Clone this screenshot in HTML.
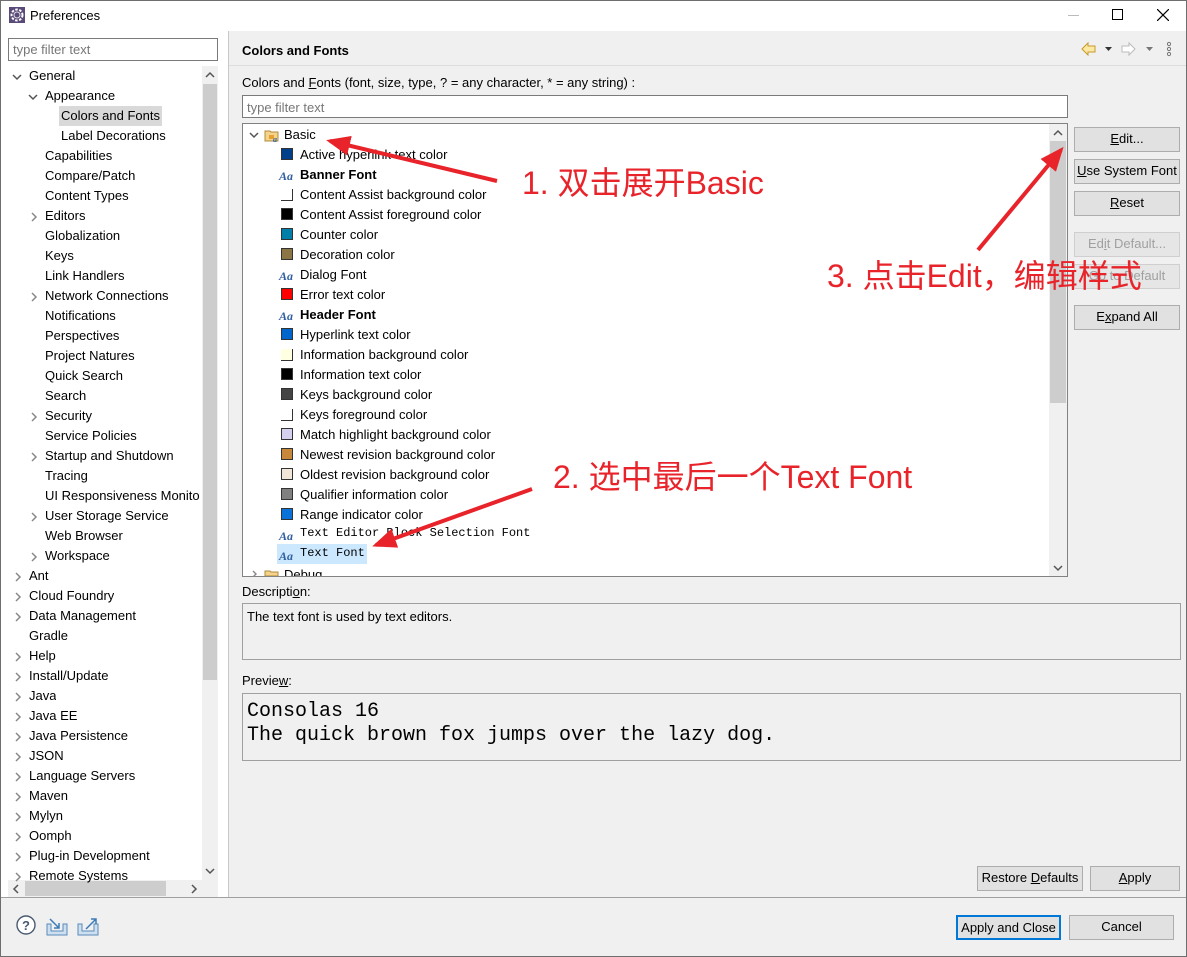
<!DOCTYPE html>
<html><head><meta charset="utf-8"><style>
*{margin:0;padding:0;box-sizing:border-box}
body{width:1187px;height:957px;background:#f0f0f0;font-family:"Liberation Sans","Noto Sans CJK SC",sans-serif;font-size:13px;color:#000;position:relative;overflow:hidden}
.a{position:absolute;white-space:nowrap}
.btn{position:absolute;background:#e1e1e1;border:1px solid #adadad;text-align:center;line-height:22px;font-size:13px}
.dis{color:#a0a0a0;background:#e6e6e6;border-color:#cfcfcf}
.li{position:absolute;height:20px;line-height:20px;white-space:nowrap}
.sw{position:absolute;left:281px;width:12px;height:12px;border:1px solid #333}
.aa{position:absolute;left:279px;font-family:"Liberation Serif",serif;font-style:italic;font-weight:bold;color:#2f5f9f;font-size:12px}
.chev{position:absolute}
</style></head><body>
<div class="a" style="left:0;top:0;width:1187px;height:957px;border:1px solid #6e6e6e;pointer-events:none;z-index:9"></div>
<div class="a" style="left:1px;top:1px;width:1185px;height:30px;background:#fff"></div>
<svg class="a" style="left:9px;top:7px" width="16" height="16"><rect x="0" y="0" width="16" height="16" fill="#5a4a7a"/><circle cx="8" cy="8" r="5.5" fill="none" stroke="#fff" stroke-width="2" stroke-dasharray="2.5 1.5"/><circle cx="8" cy="8" r="3" fill="#5a4a7a" stroke="#ddd"/></svg>
<div class="a" style="left:30px;top:8px;font-size:13px">Preferences</div>
<div class="a" style="left:1068px;top:15px;width:11px;height:1px;background:#bbb"></div>
<div class="a" style="left:1112px;top:9px;width:11px;height:11px;border:1px solid #000"></div>
<svg class="a" style="left:1157px;top:9px" width="12" height="12"><path d="M0 0L12 12M12 0L0 12" stroke="#000" stroke-width="1.2"/></svg>

<div class="a" style="left:1px;top:31px;width:227px;height:866px;background:#fff"></div>
<div class="a" style="left:228px;top:31px;width:1px;height:866px;background:#c8c8c8"></div>
<div class="a" style="left:8px;top:38px;width:210px;height:23px;border:1px solid #7a7a7a;background:#fff;color:#777;padding:3px 4px">type filter text</div>
<div class="a" style="left:202px;top:66px;width:16px;height:814px;background:#f0f0f0"></div>
<div class="a" style="left:203px;top:84px;width:14px;height:596px;background:#cdcdcd"></div>
<svg class="a" style="left:205px;top:71px" width="10" height="8"><path d="M1 6L5 2L9 6" fill="none" stroke="#555" stroke-width="1.5"/></svg>
<svg class="a" style="left:205px;top:867px" width="10" height="8"><path d="M1 2L5 6L9 2" fill="none" stroke="#555" stroke-width="1.5"/></svg>
<div class="a" style="left:8px;top:880px;width:210px;height:17px;background:#f0f0f0"></div>
<div class="a" style="left:25px;top:881px;width:141px;height:15px;background:#cdcdcd"></div>
<svg class="a" style="left:12px;top:884px" width="8" height="10"><path d="M6 1L2 5L6 9" fill="none" stroke="#555" stroke-width="1.5"/></svg>
<svg class="a" style="left:190px;top:884px" width="8" height="10"><path d="M2 1L6 5L2 9" fill="none" stroke="#555" stroke-width="1.5"/></svg>
<div class="a" style="left:59px;top:106px;width:103px;height:20px;background:#d9d9d9"></div>
<div id="lt"></div>

<div class="a" style="left:229px;top:31px;width:957px;height:35px;background:#f0f0f0;border-bottom:1px solid #ddd"></div>
<div class="a" style="left:242px;top:43px;font-weight:bold;font-size:13px">Colors and Fonts</div>
<svg class="a" style="left:1080px;top:41px" width="100" height="16">
<path d="M2 8L8 2V5H15V11H8V14Z" fill="#fbe9a4" stroke="#c89a2c"/>
<path d="M25 6h7l-3.5 4z" fill="#333"/>
<path d="M55 8L49 2V5H42V11H49V14Z" fill="#fff" stroke="#bbb"/>
<path d="M66 6h7l-3.5 4z" fill="#777"/>
<circle cx="89" cy="3" r="1.6" fill="none" stroke="#777"/><circle cx="89" cy="8" r="1.6" fill="none" stroke="#777"/><circle cx="89" cy="13" r="1.6" fill="none" stroke="#777"/>
</svg>
<div class="a" style="left:242px;top:75px">Colors and <u>F</u>onts (font, size, type, ? = any character, * = any string) :</div>
<div class="a" style="left:242px;top:95px;width:826px;height:23px;border:1px solid #7a7a7a;background:#fff;color:#777;padding:4px 4px 2px">type filter text</div>

<div class="a" style="left:242px;top:123px;width:826px;height:454px;border:1px solid #828282;background:#fff;overflow:hidden">
<div class="a" style="left:806px;top:0;width:18px;height:452px;background:#f0f0f0"></div>
<div class="a" style="left:807px;top:17px;width:16px;height:262px;background:#cdcdcd"></div>
<svg class="a" style="left:810px;top:5px" width="10" height="8"><path d="M1 6L5 2L9 6" fill="none" stroke="#555" stroke-width="1.5"/></svg>
<svg class="a" style="left:810px;top:440px" width="10" height="8"><path d="M1 2L5 6L9 2" fill="none" stroke="#555" stroke-width="1.5"/></svg>
</div>
<svg class="a" style="left:249px;top:131px" width="10" height="8"><path d="M1 2L5 6L9 2" fill="none" stroke="#555" stroke-width="1.5"/></svg>
<svg class="a" style="left:264px;top:128px" width="16" height="14"><path d="M1 3h5l1 1h7v9H1z" fill="#f3d48a" stroke="#b08a3c"/><rect x="5" y="7" width="5" height="4" fill="#e8a030"/><text x="9" y="14" font-size="8" font-style="italic" font-weight="bold" fill="#2f5f9f" font-family="Liberation Serif">a</text></svg>
<div class="li" style="left:284px;top:125px">Basic</div>
<div class="a" style="left:277px;top:544px;width:90px;height:20px;background:#cce8ff"></div>
<div id="rt"></div>
<svg class="a" style="left:251px;top:570px" width="8" height="7"><path d="M2 1L5 4L2 7" fill="none" stroke="#888" stroke-width="1.4"/></svg>
<svg class="a" style="left:264px;top:568px" width="16" height="8"><path d="M1 3h5l1 1h7v4H1z" fill="#f3d48a" stroke="#b08a3c"/></svg>
<div class="a" style="left:284px;top:566px;height:10px;overflow:hidden;line-height:18px">Debug</div>

<div class="btn" style="left:1074px;top:127px;width:106px;height:25px"><u>E</u>dit...</div>
<div class="btn" style="left:1074px;top:159px;width:106px;height:25px"><u>U</u>se System Font</div>
<div class="btn" style="left:1074px;top:191px;width:106px;height:25px"><u>R</u>eset</div>
<div class="btn dis" style="left:1074px;top:232px;width:106px;height:25px">Ed<u>i</u>t Default...</div>
<div class="btn dis" style="left:1074px;top:264px;width:106px;height:25px">Go to Default</div>
<div class="btn" style="left:1074px;top:305px;width:106px;height:25px">E<u>x</u>pand All</div>

<div class="a" style="left:242px;top:584px">Descripti<u>o</u>n:</div>
<div class="a" style="left:242px;top:603px;width:939px;height:57px;border:1px solid #a0a0a0;padding:5px 4px">The text font is used by text editors.</div>
<div class="a" style="left:242px;top:673px">Previe<u>w</u>:</div>
<div class="a" style="left:242px;top:693px;width:939px;height:68px;border:1px solid #a0a0a0;padding:6px 4px;font-family:'Liberation Mono',monospace;font-size:20px;line-height:24px">Consolas 16<br>The quick brown fox jumps over the lazy dog.</div>

<div class="btn" style="left:977px;top:866px;width:106px;height:25px">Restore <u>D</u>efaults</div>
<div class="btn" style="left:1090px;top:866px;width:90px;height:25px"><u>A</u>pply</div>

<div class="a" style="left:1px;top:897px;width:1185px;height:1px;background:#a0a0a0"></div>
<svg class="a" style="left:16px;top:915px" width="90" height="24">
<circle cx="10" cy="10" r="9" fill="#fff" stroke="#4a5a70" stroke-width="1.4"/>
<text x="6" y="15" font-size="13" font-family="Liberation Sans" font-weight="bold" fill="#4a5a70">?</text>
<path d="M31 9v11h20V9h-4v7H35V9z" fill="#cde0f0" stroke="#5a8ab8"/>
<path d="M34 4l9 9M43 8v5h-5" fill="none" stroke="#3a7ab8" stroke-width="1.5"/>
<path d="M62 9v11h20V9h-4v7H66V9z" fill="#cde0f0" stroke="#5a8ab8"/>
<path d="M70 14l10-10M75 4h5v5" fill="none" stroke="#3a7ab8" stroke-width="1.5"/>
</svg>
<div class="btn" style="left:956px;top:915px;width:105px;height:25px;border:2px solid #0078d7;line-height:21px">Apply and Close</div>
<div class="btn" style="left:1069px;top:915px;width:105px;height:25px">Cancel</div>

<svg class="a" style="left:0;top:0;z-index:5" width="1187" height="957">
<defs><marker id="m" markerWidth="6" markerHeight="5" refX="5" refY="2.5" orient="auto"><path d="M0 0L6 2.5L0 5z" fill="#e8232a"/></marker></defs>
<g stroke="#e8232a" stroke-width="4" fill="none" marker-end="url(#m)">
<line x1="497" y1="181" x2="330" y2="141"/>
<line x1="532" y1="489" x2="376" y2="545"/>
<line x1="978" y1="250" x2="1061" y2="150"/>
</g>
<g fill="#e8232a" font-family="Liberation Sans,'Noto Sans CJK SC',sans-serif" font-size="32">
<text x="522" y="194">1. 双击展开Basic</text>
<text x="553" y="488">2. 选中最后一个Text Font</text>
<text x="827" y="287">3. 点击Edit，编辑样式</text>
</g>
</svg>

<script>
var L=[[0,'v','General'],[1,'v','Appearance'],[2,'','Colors and Fonts'],[2,'','Label Decorations'],[1,'','Capabilities'],[1,'','Compare/Patch'],[1,'','Content Types'],[1,'>','Editors'],[1,'','Globalization'],[1,'','Keys'],[1,'','Link Handlers'],[1,'>','Network Connections'],[1,'','Notifications'],[1,'','Perspectives'],[1,'','Project Natures'],[1,'','Quick Search'],[1,'','Search'],[1,'>','Security'],[1,'','Service Policies'],[1,'>','Startup and Shutdown'],[1,'','Tracing'],[1,'','UI Responsiveness Monito'],[1,'>','User Storage Service'],[1,'','Web Browser'],[1,'>','Workspace'],[0,'>','Ant'],[0,'>','Cloud Foundry'],[0,'>','Data Management'],[0,'','Gradle'],[0,'>','Help'],[0,'>','Install/Update'],[0,'>','Java'],[0,'>','Java EE'],[0,'>','Java Persistence'],[0,'>','JSON'],[0,'>','Language Servers'],[0,'>','Maven'],[0,'>','Mylyn'],[0,'>','Oomph'],[0,'>','Plug-in Development'],[0,'>','Remote Systems']];
var h='';L.forEach(function(e,i){var y=66+i*20,x=29+e[0]*16;
if(e[1]=='v')h+='<svg class="chev" style="left:'+(x-17)+'px;top:'+(y+7)+'px" width="10" height="8"><path d="M1 2L5 6L9 2" fill="none" stroke="#555" stroke-width="1.5"/></svg>';
else if(e[1])h+='<svg class="chev" style="left:'+(x-15)+'px;top:'+(y+6)+'px" width="8" height="10"><path d="M2 1L6 5L2 9" fill="none" stroke="#888" stroke-width="1.5"/></svg>';
h+='<div class="li" style="left:'+x+'px;top:'+y+'px;max-width:'+(201-x)+'px;overflow:hidden">'+e[2]+'</div>';});
document.getElementById('lt').innerHTML=h;
var R=[['c','#00408a','Active hyperlink text color'],['f','','<b>Banner Font</b>'],['w','#fff','Content Assist background color'],['c','#000','Content Assist foreground color'],['c','#0080a8','Counter color'],['c','#8b7544','Decoration color'],['f','','Dialog Font'],['c','#ff0000','Error text color'],['f','','<b>Header Font</b>'],['c','#0066cc','Hyperlink text color'],['w','#ffffe1','Information background color'],['c','#000','Information text color'],['c','#444','Keys background color'],['w','#fff','Keys foreground color'],['c','#d4d0ee','Match highlight background color'],['c','#c8883c','Newest revision background color'],['c','#f2e6d8','Oldest revision background color'],['c','#808080','Qualifier information color'],['c','#0a72d8','Range indicator color'],['m','','Text Editor Block Selection Font'],['m','','Text Font']];
h='';R.forEach(function(e,i){var y=145+i*20;
if(e[0]=='f'||e[0]=='m')h+='<div class="aa" style="top:'+(y+4)+'px">Aa</div>';
else if(e[0]=='w')h+='<div class="a" style="left:281px;top:'+(y+4)+'px;width:12px;height:12px;border-right:1px solid #333;border-bottom:1px solid #333;background:'+e[1]+'"></div>';
else h+='<div class="sw" style="top:'+(y+3)+'px;background:'+e[1]+'"></div>';
h+='<div class="li" style="left:300px;top:'+(e[0]=='m'?y-2:y)+'px;'+(e[0]=='m'?'font-family:Liberation Mono,monospace;font-size:12px':'')+'">'+e[2]+'</div>';});
document.getElementById('rt').innerHTML=h;
</script>
</body></html>
